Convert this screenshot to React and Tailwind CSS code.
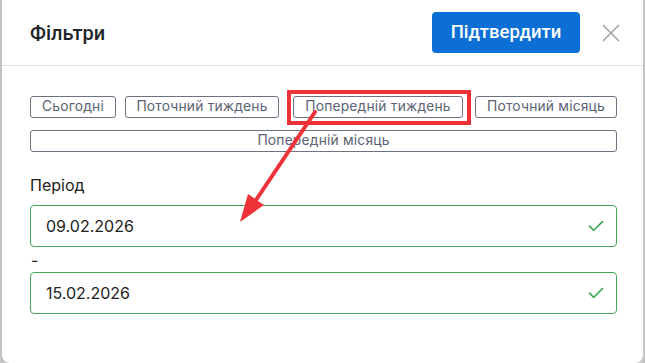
import React from "react";

function Check() {
  return (
    <svg width="16" height="12" viewBox="0 0 16 12" fill="none" className="shrink-0">
      <path d="M1.5 6.2 L5.8 10.3 L14.5 1.6" stroke="#3aa655" strokeWidth="1.6" strokeLinecap="round" strokeLinejoin="round" />
    </svg>
  );
}

function Chip({ children, className = "" }) {
  return (
    <button className={"h-[22px] rounded-[3px] border border-[#6b7280] text-[13.8px] leading-none tracking-[0.2px] text-[#5b6272] " + className}>
      {children}
    </button>
  );
}

function DateInput({ value }) {
  return (
    <div className="flex h-[42px] items-center justify-between rounded-[4px] border border-[#45a755] pl-[15px] pr-[12px]">
      <span className="text-[16px] text-[#222]">{value}</span>
      <Check />
    </div>
  );
}

export default function App() {
  return (
    <div className="h-[363px] w-[645px] overflow-hidden bg-[#c4c4c4]" style={{ fontFamily: "Inter, 'Noto Sans', sans-serif" }}>
      <div className="relative ml-[2px] h-[363px] w-[641px] rounded-b-[8px] bg-white">
        <div className="flex h-[66px] items-center justify-between border-b border-[#dee2e6] pl-[28px] pr-[22px]">
          <h2 className="text-[20px] font-medium text-[#212529]" style={{ fontFamily: "Roboto, sans-serif" }}>Фільтри</h2>
          <div className="flex items-center gap-[22px]">
            <button className="h-[41px] w-[148px] rounded-[4px] bg-[#0b6fd6] text-[18.5px] font-medium text-white" style={{ fontFamily: "Roboto, sans-serif" }}>
              Підтвердити
            </button>
            <svg width="18" height="18" viewBox="0 0 18 18" className="mr-[1px]">
              <path d="M1 1 L17 17 M17 1 L1 17" stroke="#a3a3a3" strokeWidth="1.6" />
            </svg>
          </div>
        </div>

        <div className="pl-[28px] pr-[26px] pt-[30px]">
          <div className="flex flex-wrap items-center gap-y-[12px]">
            <Chip className="w-[86px]">Сьогодні</Chip>
            <Chip className="ml-[9px] w-[154px]">Поточний тиждень</Chip>
            <Chip className="ml-[14px] w-[170px]">Попередній тиждень</Chip>
            <Chip className="ml-[12px] w-[142px]">Поточний місяць</Chip>
            <Chip className="w-full">Попередній місяць</Chip>
          </div>

          <div className="mt-[21px] text-[16px] text-[#222]">Період</div>
          <div className="mt-[8px]">
            <DateInput value="09.02.2026" />
          </div>
          <div className="mt-[1px] h-[24px] pl-[1px] text-[16px] leading-[24px] text-[#222]">-</div>
          <DateInput value="15.02.2026" />
        </div>

        <svg className="pointer-events-none absolute left-0 top-0" width="641" height="363">
          <rect x="287" y="92" width="180" height="31" fill="none" stroke="#ee3338" strokeWidth="4" />
          <line x1="313" y1="112" x2="252" y2="203" stroke="#ee3338" strokeWidth="4" strokeLinecap="round" />
          <polygon points="238,222 246,194 262,205" fill="#ee3338" />
        </svg>
      </div>
    </div>
  );
}
